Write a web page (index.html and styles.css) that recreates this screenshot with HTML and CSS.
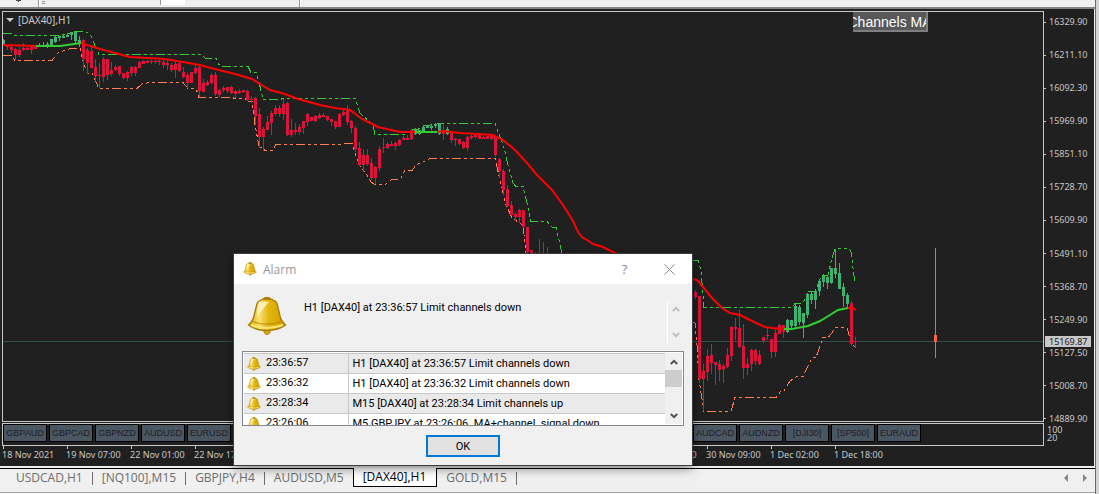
FILE: index.html
```
<!DOCTYPE html>
<html lang="en">
<head>
    <meta charset="utf-8">
    <title>[DAX40],H1</title>
    <link rel="stylesheet" href="styles.css">
</head>
<body>
    <svg class="defs" width="0" height="0" aria-hidden="true">
        <defs>
            <linearGradient id="gold" x1="0" y1="0" x2="1" y2="0">
                <stop offset="0" stop-color="#dcae05"/>
                <stop offset="0.3" stop-color="#f7df70"/>
                <stop offset="0.55" stop-color="#e3b60c"/>
                <stop offset="1" stop-color="#d09c00"/>
            </linearGradient>
            <symbol id="bell" viewBox="0 0 40 40">
                <path d="M17 34h6v2q-1 2.500-3 2.500T17 36z" fill="#e0ac10" stroke="#a87908"/>
                <path d="M16 3q4-2.500 8 0l3 1.500q3 1 3.500 5L33 20q1 5 5.500 9-7 5.500-18.500 5.500T1.500 29Q6 25 7 20L9.500 9.500Q10 5.500 13 4.500z" fill="url(#gold)" stroke="#a87908" stroke-width="1.300"/>
                <path d="M5.500 25.500Q19 31 34.500 25.500" fill="none" stroke="#b98a0c"/>
                <path d="M12 7q4-2 10-1-6 6-12 16 0-9 2-15z" fill="#fff8cf" opacity="0.8"/>
                <path d="M4 29q15 6 32 0" fill="none" stroke="#fae671" stroke-width="2"/>
                <path d="M15.500 4q1-3 4.500-3t4.500 3z" fill="#ad7e0c"/>
            </symbol>
            <symbol id="up" viewBox="0 0 8 6">
                <path d="M0.800 5L4 1.800 7.200 5" fill="none" stroke="currentColor" stroke-width="2"/>
            </symbol>
            <symbol id="down" viewBox="0 0 8 6">
                <path d="M0.800 1L4 4.200 7.200 1" fill="none" stroke="currentColor" stroke-width="2"/>
            </symbol>
        </defs>
    </svg>

    <div class="terminal">
        <main class="workspace">
            <div class="toolbar">
                <svg width="310" height="7" shape-rendering="crispEdges">
                    <path d="M16 0h5v1h-5zM18 1h1v1h-1z" fill="#444"/>
                    <path d="M38 0h1v7h-1zM160 0h1v5h-1zM299 0h1v7h-1z" fill="#999"/>
                    <path d="M42 1h3v1h-3zM42 3h3v1h-3z" fill="#999"/>
                    <path d="M39 0h1v7h-1zM161 0h24v5h-24zM300 0h1v7h-1z" fill="#fff"/>
                </svg>
            </div>

            <section class="chart-window">
                <div class="chart-row price-row">
                    <div class="plot">
                        <svg id="chart" class="chart">
                            <g transform="translate(-3 -12)" shape-rendering="crispEdges">
                                <path class="bid" d="M3 341.500H4000"/>
                                <path class="band upper" d="M3 33.500H12L15 35.500H60L70 33L75 31.500H84L90 34L96 48L99 54.500H200L206 58.500H216L220 66.500H248L251 72.500H256L259 82L263 99.500H280L283 98.500H355L360 113L373 125L375 134.500H406L412 129L417 130L423 126L440 123.500H495L498 132L503 144L508 165L513 183L516 186.500H523L527 203L531 221.500H547L552 227H556L562 253"/>
                                <path class="band upper" d="M692 260.500H698L701 270L704 307.500H792L795 303.500H803L808 291.500H815L820 279L823 275H828L832 258L835 248.500H849L851 252L855 284"/>
                                <path class="band lower" d="M3 55.500H12L15 60.500H52L58 53L65 50L71 48.500H80L84 65L88 73H92L95 80L99 88.500H137L142 84L150 82.500H183L188 88.500H196L199 97.500H232L235 98.500H245L248 101H252L255 125L259 146L265 150.500H272L276 144.500H340L342 143.500H352L357 159L360 166L367 175L371 182L375 184.500H385L392 179.500H400L405 170.500H412L416 165L423 162L430 158.500H495L500 180L506 205L512 218L518 222L523 225L526 253"/>
                                <path class="band lower" d="M692 322.500H695L697 345L699 380L704 411.500H731L735 397.500H776L781 391H784L790 381L797 376.500H803L808 366L812 357.500H816L823 337.500H828L832 333L835 327.500H847L851 343L855 347"/>
                                <g id="candles"></g>
                                <path class="ma falling" d="M3 45L36 46M81 43L90 46L100 49L115 53L130 57L165 59L183 62L200 65L215 69L235 74L252 79L260 84L270 90L285 94L298 99L320 105L335 108L350 110L362 119L378 127L400 132H415M437 132L443 131L460 133L478 134L493 135L503 140L515 150L527 163L537 175L552 190L563 205L573 221L578 232L582 237L587 240L593 244L603 247L615 253L650 266L692 279L697 280L703 287L712 298L722 308L730 313L740 315L750 320L765 327L780 329H784M848 308H853L856 310"/>
                                <path class="ma rising" d="M36 46H60L81 43M415 132H437M784 329H792L797 328L808 326L820 321L830 315L838 310L848 308"/>
                            </g>
                        </svg>
                        <div class="chart-title"><span class="caret"></span>[DAX40],H1</div>
                        <button class="channels-btn" type="button">Channels MA</button>
                    </div>
                    <div class="price-axis">
                        <span>16329.90</span>
                        <span>16211.10</span>
                        <span>16092.30</span>
                        <span>15969.90</span>
                        <span>15851.10</span>
                        <span>15728.70</span>
                        <span>15609.90</span>
                        <span>15491.10</span>
                        <span>15368.70</span>
                        <span>15249.90</span>
                        <span>15127.50</span>
                        <span>15008.70</span>
                        <span>14889.90</span>
                        <b class="bid-label">15169.87</b>
                    </div>
                </div>

                <div class="chart-row">
                    <div class="plot symbols">
                        <button type="button">GBPAUD</button>
                        <button type="button">GBPCAD</button>
                        <button type="button">GBPNZD</button>
                        <button type="button">AUDUSD</button>
                        <button type="button">EURUSD</button>
                        <button type="button">GBPUSD</button>
                        <button type="button">NZDUSD</button>
                        <button type="button">USDCAD</button>
                        <button type="button">USDCHF</button>
                        <button type="button">USDJPY</button>
                        <button type="button">EURJPY</button>
                        <button type="button">GBPJPY</button>
                        <button type="button">AUDJPY</button>
                        <button type="button">EURGBP</button>
                        <button type="button">EURCAD</button>
                        <button type="button">AUDCAD</button>
                        <button type="button">AUDNZD</button>
                        <button type="button">[DJI30]</button>
                        <button type="button">[SP500]</button>
                        <button type="button">EURAUD</button>
                    </div>
                    <div class="level-axis">
                        <span>100</span>
                        <span>20</span>
                    </div>
                </div>

                <div class="time-axis">
                    <span>18 Nov 2021</span>
                    <span>19 Nov 07:00</span>
                    <span>22 Nov 01:00</span>
                    <span>22 Nov 17:00</span>
                    <span>23 Nov 10:00</span>
                    <span>24 Nov 03:00</span>
                    <span>24 Nov 19:00</span>
                    <span>25 Nov 12:00</span>
                    <span>26 Nov 05:00</span>
                    <span>26 Nov 21:00</span>
                    <span>29 Nov 16:00</span>
                    <span>30 Nov 09:00</span>
                    <span>1 Dec 02:00</span>
                    <span>1 Dec 18:00</span>
                </div>
            </section>

            <nav class="chart-tabs">
                <a href="#">USDCAD,H1</a>
                <a href="#">[NQ100],M15</a>
                <a href="#">GBPJPY,H4</a>
                <a href="#">AUDUSD,M5</a>
                <a href="#" class="active">[DAX40],H1</a>
                <a href="#">GOLD,M15</a>
                <span class="tab-scroll">
                    <button type="button" class="prev" aria-label="Previous"></button>
                    <button type="button" class="next" aria-label="Next"></button>
                </span>
            </nav>
            <div class="panel-edge"></div>
        </main>
        <div class="side-strip"></div>
    </div>

    <div class="dialog" role="dialog" aria-labelledby="dialog-title">
        <div class="dialog-bar">
            <svg class="bell-small"><use href="#bell"/></svg>
            <span id="dialog-title">Alarm</span>
            <button type="button" class="help" aria-label="Help">?</button>
            <button type="button" class="close" aria-label="Close">
                <svg width="11" height="11"><path d="M0.500 0.500l10 10M10.500 0.500l-10 10" stroke="#888" fill="none"/></svg>
            </button>
        </div>
        <div class="dialog-body">
            <div class="message">
                <svg class="bell-big"><use href="#bell"/></svg>
                <p>H1 [DAX40] at 23:36:57 Limit channels down</p>
                <div class="scroll scroll-off">
                    <button type="button" aria-label="Up"><svg><use href="#up"/></svg></button>
                    <button type="button" aria-label="Down"><svg><use href="#down"/></svg></button>
                </div>
            </div>
            <div class="alert-list">
                <table>
                    <tr>
                        <td><svg class="bell-small"><use href="#bell"/></svg>23:36:57</td>
                        <td>H1 [DAX40] at 23:36:57 Limit channels down</td>
                    </tr>
                    <tr>
                        <td><svg class="bell-small"><use href="#bell"/></svg>23:36:32</td>
                        <td>H1 [DAX40] at 23:36:32 Limit channels down</td>
                    </tr>
                    <tr>
                        <td><svg class="bell-small"><use href="#bell"/></svg>23:28:34</td>
                        <td>M15 [DAX40] at 23:28:34 Limit channels up</td>
                    </tr>
                    <tr>
                        <td><svg class="bell-small"><use href="#bell"/></svg>23:26:06</td>
                        <td>M5 GBPJPY at 23:26:06&nbsp; MA+channel&nbsp; signal down</td>
                    </tr>
                </table>
                <div class="scroll">
                    <button type="button" aria-label="Up"><svg><use href="#up"/></svg></button>
                    <div class="thumb"></div>
                    <button type="button" aria-label="Down"><svg><use href="#down"/></svg></button>
                </div>
            </div>
            <button type="button" class="ok-btn">OK</button>
        </div>
    </div>

    <script src="chart.js"></script>
</body>
</html>
```

FILE: styles.css
```
* {
    box-sizing: border-box;
}
body {
    margin: 0;
    background-color: #f0f0f0;
    font-family: "Noto Sans", sans-serif;
    font-size: 11px;
}
button {
    margin: 0;
    padding: 0;
    border: none;
    background: none;
    font-family: inherit;
}
.defs {
    position: absolute;
}
.terminal {
    display: flex;
    min-height: 100vh;
}
.workspace {
    flex: 1;
    min-width: 0;
    display: flex;
    flex-direction: column;
}
.side-strip {
    width: 4px;
    background-color: #d4d4d4;
    border-left: 1px solid #696969;
}
.toolbar {
    height: 9px;
    border-bottom: 2px solid #858585;
}
.toolbar svg {
    display: block;
}

/* chart */
.chart-window {
    flex: 1;
    display: flex;
    flex-direction: column;
    margin-right: 1px;
    padding: 2px 0 0 2px;
    background-color: #202020;
    color: #c8c8c8;
    font-size: 9px;
}
.chart-row {
    display: grid;
    grid-template-columns: minmax(0, 1fr) 50px;
    margin-bottom: 1px;
}
.price-row {
    flex: 1;
}
.plot {
    position: relative;
    overflow: hidden;
    border: 1px solid #c8c8c8;
}
.chart {
    display: block;
    width: 100%;
    height: 100%;
}
.chart path {
    fill: none;
}
.chart .bid {
    stroke: #2f4f4f;
}
.chart .band {
    stroke-dasharray: 9 3 3 3 3 3;
}
.chart .upper {
    stroke: #32cd32;
}
.chart .lower {
    stroke: #ff7f50;
}
.chart .ma {
    stroke-width: 2;
    shape-rendering: geometricPrecision;
}
.chart .falling {
    stroke: #ff0000;
}
.chart .rising {
    stroke: #32cd32;
}
.chart .down {
    fill: #dc143c;
}
.chart .up {
    fill: #3cb371;
}
.chart .marker {
    fill: #ff6347;
}
.chart-title {
    position: absolute;
    top: 1px;
    left: 3px;
    display: flex;
    align-items: center;
    gap: 4px;
    font-size: 10px;
    line-height: 14px;
}
.caret {
    border: 4px solid transparent;
    border-top-color: #c8c8c8;
    border-bottom: none;
}
.channels-btn {
    position: absolute;
    top: 0;
    right: 115px;
    width: 75px;
    height: 20px;
    display: flex;
    justify-content: center;
    align-items: center;
    overflow: hidden;
    padding-top: 2px;
    background-color: #585858;
    border-right: 2px solid #808080;
    border-bottom: 2px solid #808080;
    color: #fff;
    font-family: "Liberation Sans", sans-serif;
    font-size: 14px;
    white-space: nowrap;
}
.price-axis {
    position: relative;
    display: flex;
    flex-direction: column;
    justify-content: space-between;
    padding-top: 4px;
    margin-bottom: -4px;
}
.price-axis span {
    display: flex;
    align-items: center;
    gap: 3px;
    line-height: 14px;
}
.price-axis span::before {
    content: "";
    width: 2px;
    height: 1px;
    background-color: #c8c8c8;
}
.bid-label {
    position: absolute;
    top: 325px;
    left: 1px;
    padding: 0 4px;
    background-color: #c8c8c8;
    color: #202020;
    font-weight: normal;
    line-height: 11px;
}
.symbols {
    display: flex;
    gap: 2px;
    height: 23px;
}
.symbols button {
    flex: none;
    width: 44px;
    height: 18px;
    background-color: #4a5662;
    border: 1px solid #000;
    color: #1c2024;
    font-family: "Liberation Sans", sans-serif;
    font-size: 9px;
}
.level-axis {
    padding: 3px 0 0 3px;
}
.level-axis span {
    display: block;
    line-height: 8px;
}
.time-axis {
    display: flex;
    overflow: hidden;
    height: 20px;
    margin-top: -1px;
}
.time-axis span {
    flex: none;
    width: 64px;
    line-height: 17px;
    white-space: nowrap;
    background: linear-gradient(#c8c8c8, #c8c8c8) 1px 0 / 1px 3px no-repeat;
}

/* chart tabs */
.chart-tabs {
    display: flex;
    align-items: flex-start;
    height: 24px;
    margin-top: 2px;
    padding-left: 7px;
    border-top: 1px solid #000;
    font-family: "Open Sans", sans-serif;
    font-size: 12px;
}
.chart-tabs a {
    position: relative;
    padding: 0 10px 0 9px;
    color: #6d6d6d;
    line-height: 18px;
    text-decoration: none;
}
.chart-tabs a::after {
    content: "";
    position: absolute;
    top: 3px;
    right: 0;
    height: 13px;
    border-right: 1px solid #6d6d6d;
}
.chart-tabs .active {
    margin-top: -1px;
    margin-left: -1px;
    background-color: #fff;
    border: 1px solid #000;
    border-top: none;
    color: #000;
}
.chart-tabs .active::after {
    display: none;
}
.tab-scroll {
    display: flex;
    gap: 15px;
    margin: 5px 8px 0 auto;
}
.tab-scroll button {
    border: 4px solid transparent;
}
.tab-scroll .prev {
    border-left: none;
    border-right-color: #888;
}
.tab-scroll .next {
    border-right: none;
    border-left-color: #888;
}
.panel-edge {
    height: 2px;
    border-top: 1px solid #a0a0a0;
    background-color: #fff;
}

/* alarm window */
.dialog {
    position: absolute;
    top: 254px;
    left: 234px;
    width: 458px;
    background-color: #f0f0f0;
    box-shadow: 0 0 0 1px #3c3c3c, 0 3px 10px rgba(0, 0, 0, 0.5);
    color: #000;
    font-family: Roboto, sans-serif;
}
.dialog-bar {
    display: flex;
    align-items: center;
    height: 30px;
    padding-left: 9px;
    background-color: #fff;
    color: #999;
    font-family: "Open Sans", sans-serif;
    font-size: 12px;
}
.bell-small {
    width: 14px;
    height: 14px;
    margin-right: 6px;
}
.dialog-bar button {
    display: flex;
    justify-content: center;
    align-items: center;
    width: 45px;
    height: 30px;
    color: #888;
    font-size: 13px;
}
.dialog-bar .help {
    margin-left: auto;
}
.dialog-body {
    display: flex;
    flex-direction: column;
    padding: 12px 8px 8px;
}
.message {
    display: flex;
    height: 55px;
    padding: 0 0 0 5px;
}
.bell-big {
    width: 40px;
    height: 40px;
}
.message p {
    flex: 1;
    margin: 5px 0 0 17px;
    line-height: 14px;
}
.scroll {
    display: flex;
    flex-direction: column;
    width: 17px;
    background-color: #f0f0f0;
    color: #505050;
}
.scroll button {
    display: flex;
    justify-content: center;
    align-items: center;
    height: 17px;
    color: inherit;
}
.scroll button:last-child {
    margin-top: auto;
}
.scroll svg {
    width: 8px;
    height: 6px;
}
.scroll .thumb {
    height: 17px;
    background-color: #cdcdcd;
}
.scroll-off {
    height: 43px;
    margin: 4px 0 0;
    border-left: 1px solid #fff;
    color: #bfbfbf;
}
.alert-list {
    display: flex;
    height: 75px;
    overflow: hidden;
    padding: 1px;
    background-color: #fff;
    border: 1px solid #828790;
}
.alert-list table {
    flex: 1;
    height: 81px;
    border-collapse: collapse;
    border-top: 1px solid #c8c8c8;
}
.alert-list td {
    height: 20px;
    padding: 0 4px;
    border-bottom: 1px solid #c8c8c8;
    white-space: nowrap;
}
.alert-list td:first-child {
    width: 104px;
    padding-left: 3px;
    border-right: 1px solid #c8c8c8;
}
.alert-list tr:nth-child(odd) {
    background-color: #eaeaea;
}
.alert-list td svg {
    margin-right: 5px;
    vertical-align: middle;
}
.ok-btn {
    align-self: center;
    width: 74px;
    height: 22px;
    margin-top: 9px;
    background-color: #e1e1e1;
    border: 2px solid #0078d7;
    font-size: 11px;
}
```

FILE: chart.js
```
// [high, body top, body bottom, low], one bar every 4px
const startBars = [
    [39, 40, 45, 45], [45, 46, 47, 50], [45, 47, 50, 53], [48, 49, 55, 60], [47, 50, 55, 57],
    [43, 48, 50, 51], [47, 48, 50, 50], [46, 47, 50, 54], [46, 47, 49, 49], [43, 45, 46, 47],
    [42, 45, 46, 47], [42, 44, 45, 48], [39, 39, 46, 46], [35, 37, 42, 43], [36, 36, 38, 41],
    [35, 36, 38, 38], [33, 35, 37, 37], [32, 32, 35, 40], [32, 32, 41, 43], [36, 40, 43, 47],
    [39, 40, 59, 71], [48, 50, 63, 74], [45, 51, 68, 68], [59, 67, 76, 81], [63, 75, 76, 88],
    [57, 59, 77, 82], [59, 59, 75, 80], [62, 70, 74, 76], [65, 67, 70, 71], [66, 66, 74, 76],
    [73, 73, 78, 79], [71, 72, 78, 81], [66, 67, 73, 76], [66, 67, 73, 76], [61, 62, 68, 68],
    [60, 61, 64, 64], [60, 61, 63, 63], [60, 61, 62, 64], [60, 61, 62, 64], [60, 61, 62, 65],
    [60, 62, 65, 68], [59, 63, 65, 70], [63, 65, 70, 72], [62, 64, 70, 78], [62, 63, 71, 72],
    [67, 72, 77, 78], [73, 75, 83, 88], [72, 72, 83, 83], [65, 68, 73, 74], [66, 67, 91, 97],
    [79, 83, 92, 92], [80, 82, 85, 86], [73, 75, 83, 84], [72, 75, 94, 96], [89, 90, 95, 97],
    [86, 88, 90, 92], [87, 87, 91, 93], [86, 87, 93, 94], [90, 91, 94, 98], [89, 91, 93, 94],
    [90, 90, 92, 93], [90, 91, 100, 101], [96, 99, 100, 103], [97, 98, 116, 125], [108, 114, 137, 148],
    [127, 129, 137, 151], [116, 122, 130, 130], [111, 113, 123, 135], [105, 108, 114, 115], [105, 108, 114, 117],
    [99, 104, 114, 120], [102, 103, 135, 136], [119, 130, 135, 137], [123, 130, 132, 135], [124, 127, 132, 135],
    [121, 121, 128, 134], [113, 114, 122, 126], [117, 117, 121, 121], [115, 116, 121, 122], [113, 115, 118, 119],
    [113, 115, 117, 117], [116, 116, 120, 121], [119, 119, 122, 126], [121, 121, 127, 129], [113, 114, 127, 127],
    [110, 112, 115, 116], [105, 111, 122, 125], [120, 121, 128, 133], [126, 128, 149, 152], [142, 148, 165, 166],
    [149, 155, 165, 172], [149, 155, 164, 166], [158, 163, 178, 180], [166, 167, 178, 184], [146, 149, 168, 171],
    [138, 147, 148, 153], [142, 144, 148, 149], [141, 144, 146, 146], [142, 143, 146, 150], [139, 140, 145, 146],
    [136, 138, 140, 140], [135, 138, 140, 140], [129, 130, 139, 140], [128, 130, 134, 135], [130, 130, 134, 135],
    [125, 127, 131, 132], [125, 125, 128, 128], [125, 126, 128, 130], [123, 124, 126, 128], [123, 123, 134, 135],
    [124, 130, 134, 140], [127, 129, 134, 135], [131, 133, 140, 143], [138, 139, 140, 146], [139, 139, 144, 145],
    [141, 142, 148, 149], [136, 137, 148, 151], [134, 136, 138, 140], [134, 135, 137, 139], [135, 135, 139, 139],
    [136, 137, 139, 139], [136, 136, 139, 139], [134, 135, 139, 140], [136, 137, 155, 157], [158, 159, 171, 178],
    [169, 171, 190, 195], [185, 189, 206, 207], [201, 205, 215, 216], [212, 214, 217, 221], [209, 210, 217, 223],
    [210, 210, 227, 228], [227, 227, 252, 253], [250, 250, 270, 275], [252, 256, 270, 275], [239, 256, 262, 270],
    [242, 258, 264, 270], [247, 260, 266, 272]
];
const endBars = [
    [279, 285, 293, 294], [290, 292, 297, 299], [296, 296, 379, 383], [364, 371, 379, 411], [349, 356, 372, 381],
    [344, 355, 363, 374], [362, 362, 365, 385], [360, 364, 370, 381], [364, 366, 369, 383], [348, 355, 367, 368],
    [326, 327, 356, 361], [318, 327, 329, 340], [310, 328, 347, 348], [324, 346, 368, 379], [358, 364, 368, 375],
    [349, 350, 364, 371], [349, 350, 361, 365], [350, 355, 364, 365], [337, 337, 341, 343], [328, 335, 336, 340],
    [339, 339, 352, 358], [328, 333, 352, 357], [324, 325, 334, 334], [325, 325, 332, 338], [319, 320, 332, 333],
    [320, 320, 326, 328], [304, 306, 326, 327], [305, 307, 322, 325], [313, 313, 323, 338], [293, 294, 315, 318],
    [291, 294, 300, 304], [291, 291, 300, 309], [279, 281, 291, 296], [274, 276, 282, 287], [276, 277, 283, 289],
    [268, 268, 283, 284], [249, 268, 274, 278], [263, 273, 289, 289], [283, 287, 296, 307], [293, 295, 304, 307],
    [301, 303, 344, 346], [337, 341, 342, 348]
];
const risingX = [[3, 3], [39, 79], [415, 439], [447, 447], [787, 847]];

function candle(x, bar, cls) {
    const [high, top, bottom, low] = bar;
    return `<rect class="${cls}" x="${x}" y="${high}" width="1" height="${low - high}"/>` +
        `<rect class="${cls}" x="${x - 1}" y="${top}" width="3" height="${bottom - top}"/>`;
}

function series(bars, startX) {
    return bars.map((bar, i) => {
        const x = startX + i * 4;
        const up = risingX.some(([from, to]) => x >= from && x <= to);
        return candle(x, bar, up ? 'up' : 'down');
    }).join('');
}

document.getElementById('candles').innerHTML =
    series(startBars, 3) + series(endBars, 691) +
    candle(935, [248, 335, 342, 358], 'marker');
```
